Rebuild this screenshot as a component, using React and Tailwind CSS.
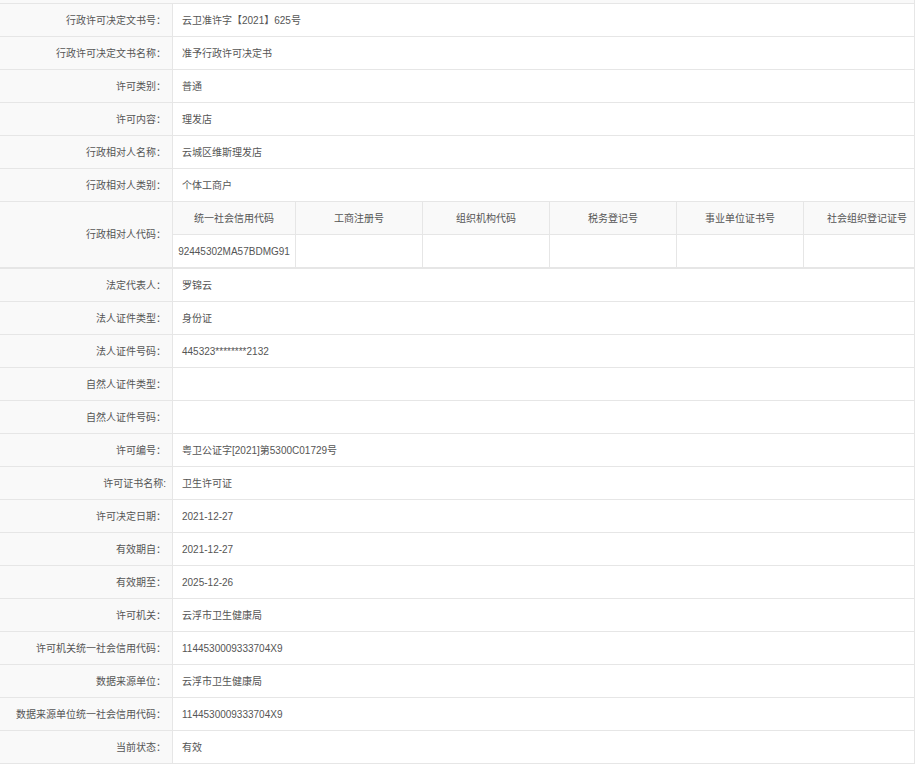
const rows1 = [
  ["行政许可决定文书号：", "云卫准许字【2021】625号"],
  ["行政许可决定文书名称：", "准予行政许可决定书"],
  ["许可类别：", "普通"],
  ["许可内容：", "理发店"],
  ["行政相对人名称：", "云城区维斯理发店"],
  ["行政相对人类别：", "个体工商户"],
];
const rows2 = [
  ["法定代表人：", "罗锦云"],
  ["法人证件类型：", "身份证"],
  ["法人证件号码：", "445323********2132"],
  ["自然人证件类型：", ""],
  ["自然人证件号码：", ""],
  ["许可编号：", "粤卫公证字[2021]第5300C01729号"],
  ["许可证书名称:", "卫生许可证"],
  ["许可决定日期：", "2021-12-27"],
  ["有效期自：", "2021-12-27"],
  ["有效期至：", "2025-12-26"],
  ["许可机关：", "云浮市卫生健康局"],
  ["许可机关统一社会信用代码：", "1144530009333704X9"],
  ["数据来源单位：", "云浮市卫生健康局"],
  ["数据来源单位统一社会信用代码：", "1144530009333704X9"],
  ["当前状态：", "有效"],
];
const heads = ["统一社会信用代码", "工商注册号", "组织机构代码", "税务登记号", "事业单位证书号", "社会组织登记证号"];
const widths = ["w-[123px]", "w-[127px]", "w-[127px]", "w-[127px]", "w-[127px]", "w-[127px]"];

function Row({ l, v }) {
  return (
    <div className="flex h-[33px] border-b border-[#e6e6e6]">
      <div className="w-[173px] shrink-0 bg-[#f9f9f9] border-r border-[#e6e6e6] flex items-center justify-end pr-[6px] text-[#555] whitespace-nowrap">{l}</div>
      <div className="flex-1 flex items-center pl-[9px] text-[#555] bg-white whitespace-nowrap">{v}</div>
    </div>
  );
}

export default function App() {
  return (
    <div className="w-[919px] h-[764px] overflow-hidden bg-white text-[10px]" style={{ fontFamily: '"Liberation Sans","Noto Sans CJK SC",sans-serif' }}>
      <div className="w-[915px] border-r border-[#e6e6e6]">
        <div className="h-[4px] bg-[#f9f9f9] border-b border-[#e6e6e6]"></div>
        {rows1.map(([l, v]) => <Row key={l} l={l} v={v} />)}
        <div className="flex h-[67px] border-b-2 border-[#e6e6e6]">
          <div className="w-[173px] shrink-0 bg-[#f9f9f9] border-r border-[#e6e6e6] flex items-center justify-end pr-[6px] text-[#555]">行政相对人代码：</div>
          <div className="flex-1 overflow-hidden">
            <div className="flex h-[33px] border-b border-[#e6e6e6] bg-[#f9f9f9] w-[760px]">
              {heads.map((h, i) => (
                <div key={h} className={`${widths[i]} shrink-0 border-r border-[#e6e6e6] flex items-center justify-center text-[#555] whitespace-nowrap`}>{h}</div>
              ))}
            </div>
            <div className="flex h-[32px] w-[760px]">
              {heads.map((h, i) => (
                <div key={h} className={`${widths[i]} shrink-0 border-r border-[#e6e6e6] flex items-center justify-center text-[#555] whitespace-nowrap`}>{i === 0 ? "92445302MA57BDMG91" : ""}</div>
              ))}
            </div>
          </div>
        </div>
        {rows2.map(([l, v]) => <Row key={l} l={l} v={v} />)}
      </div>
    </div>
  );
}
